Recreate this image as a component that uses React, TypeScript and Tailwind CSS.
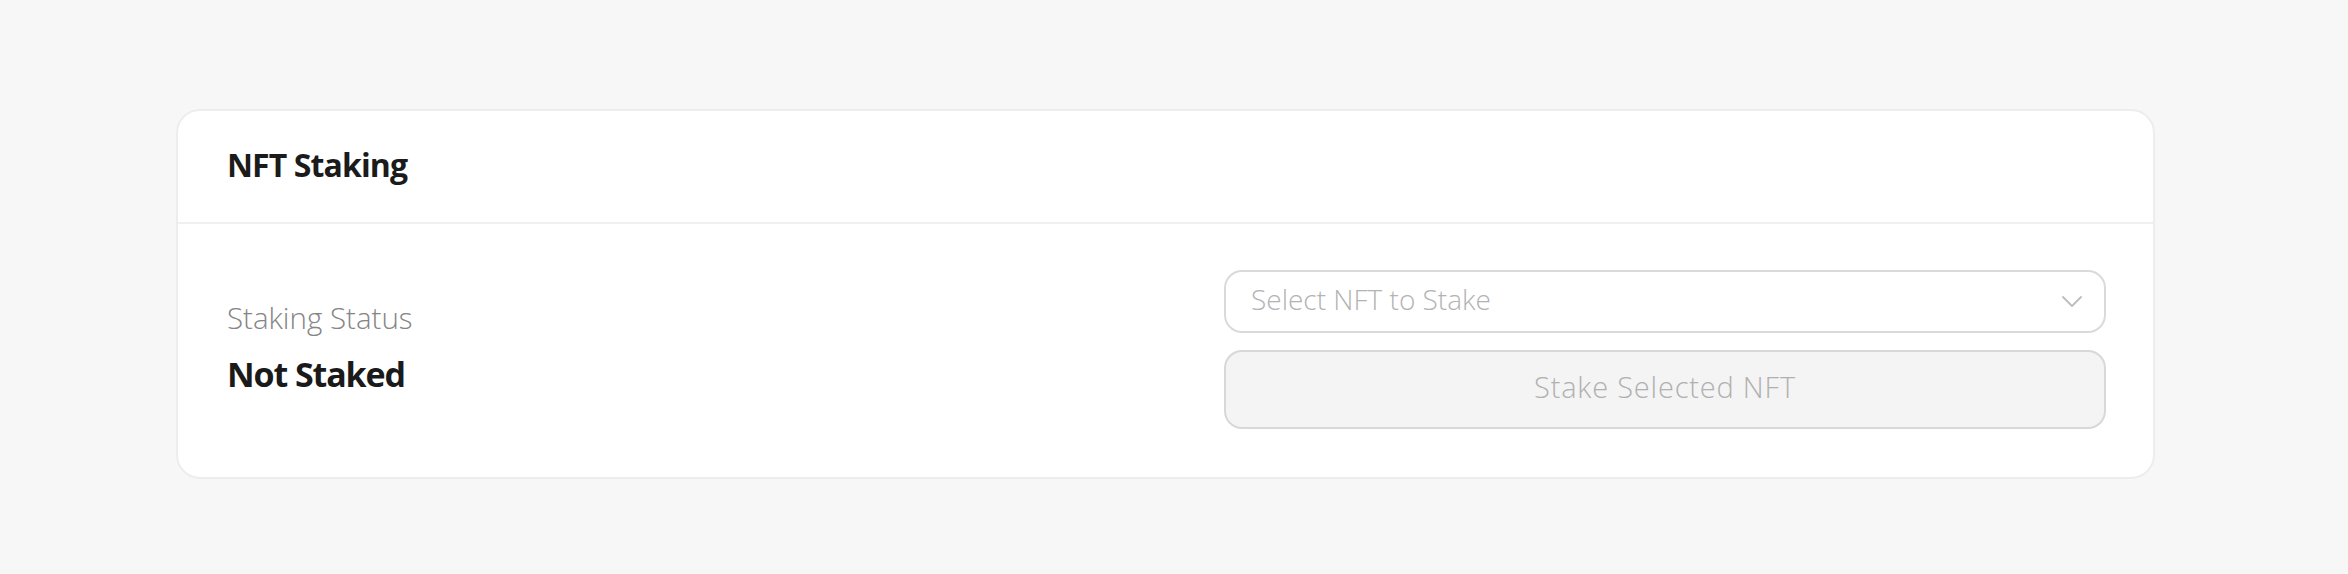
import React from "react";

export default function App() {
  return (
    <div className="min-h-screen w-full bg-[#f7f7f7] pl-[176px] pt-[109px] font-['Open_Sans',sans-serif]">
      <div className="w-[1979px] rounded-[24px] border-2 border-[#ededed] bg-white">
        <div className="flex h-[113px] items-center border-b-2 border-[#f0f0f0] px-[49px]">
          <h2 className="pb-[3px] text-[32px] font-bold leading-none tracking-[-0.9px] text-[#1b1b1b]">NFT Staking</h2>
        </div>
        <div className="flex items-center justify-between pt-[46px] pb-[48px] pl-[49px] pr-[47px]">
          <div className="mb-[6px] flex flex-col">
            <span className="text-[29.5px] font-light leading-[40px] text-[#858585]">Staking Status</span>
            <span className="mt-[14px] text-[34px] font-bold leading-[44px] tracking-[-1.1px] text-[#1a1a1a]">Not Staked</span>
          </div>
          <div className="flex w-[882px] flex-col gap-[17px]">
            <button
              type="button"
              className="flex h-[63px] items-center justify-between rounded-[18px] border-2 border-[#dadada] bg-white pl-[25px] pr-[21px] text-left"
            >
              <span className="pb-[6px] text-[28px] font-light text-[#b3b3b3]">Select NFT to Stake</span>
              <svg width="22" height="14" viewBox="0 0 22 14" fill="none">
                <path d="M2 2 L11 11 L20 2" stroke="#bdbdbd" strokeWidth="1.8" strokeLinecap="round" strokeLinejoin="round" />
              </svg>
            </button>
            <button
              type="button"
              disabled
              className="flex h-[79px] items-center justify-center rounded-[18px] border-2 border-[#d8d8d8] bg-[#f4f4f4]"
            >
              <span className="pb-[6px] text-[29px] font-light tracking-[0.8px] text-[#b0b0b0]">Stake Selected NFT</span>
            </button>
          </div>
        </div>
      </div>
    </div>
  );
}
